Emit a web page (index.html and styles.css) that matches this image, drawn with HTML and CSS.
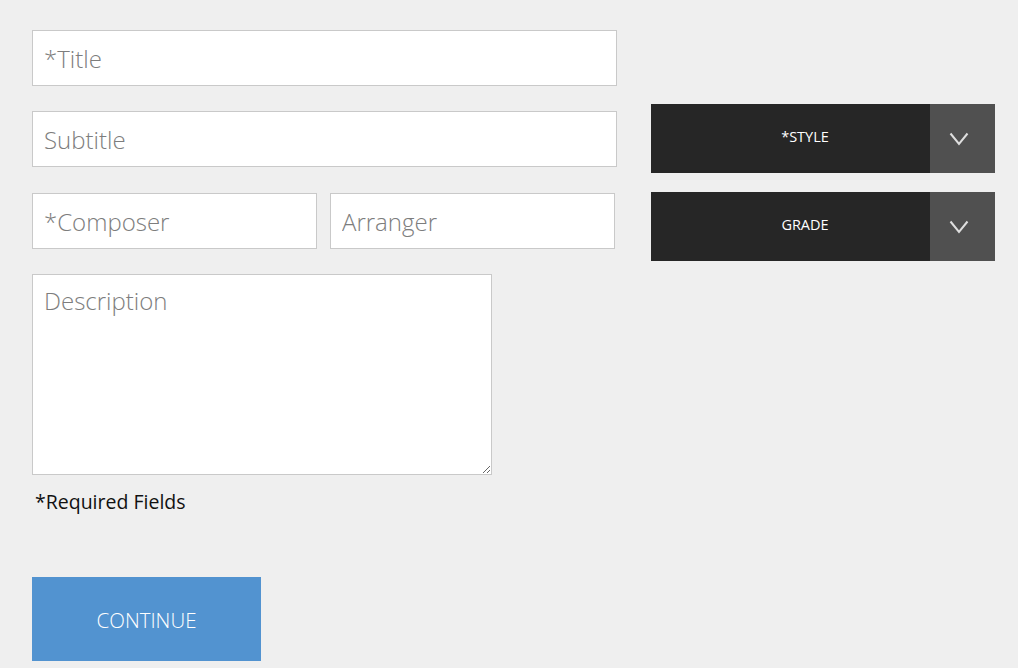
FILE: index.html
```html
<!DOCTYPE html>
<html lang="en">
<head>
<meta charset="utf-8">
<title>Piece details</title>
<link rel="stylesheet" href="styles.css">
</head>
<body>
<div class="page">
  <form class="form-left">
    <input class="field" type="text" placeholder="*Title">
    <input class="field sub" type="text" placeholder="Subtitle">
    <div class="pair">
      <input class="field half" type="text" placeholder="*Composer">
      <input class="field half" type="text" placeholder="Arranger">
    </div>
    <textarea class="field desc" placeholder="Description"></textarea>
    <p class="req">*Required Fields</p>
    <button class="continue" type="button">CONTINUE</button>
  </form>
  <div class="form-right">
    <div class="select">
      <span class="select-label">*STYLE</span>
      <span class="select-arrow"><svg width="20" height="14" viewBox="0 0 20 14"><path d="M1.5 1.5 L10 12 L18.5 1.5" fill="none" stroke="#dedede" stroke-width="2"/></svg></span>
    </div>
    <div class="select">
      <span class="select-label">GRADE</span>
      <span class="select-arrow"><svg width="20" height="14" viewBox="0 0 20 14"><path d="M1.5 1.5 L10 12 L18.5 1.5" fill="none" stroke="#dedede" stroke-width="2"/></svg></span>
    </div>
  </div>
</div>
</body>
</html>
```
FILE: styles.css
```css
html, body {
  margin: 0;
  padding: 0;
  background: #efefef;
  font-family: "Open Sans", "Liberation Sans", sans-serif;
}
.page {
  display: flex;
  gap: 34px;
  padding: 30px 0 0 32px;
}
.form-left {
  width: 585px;
  display: flex;
  flex-direction: column;
  align-items: flex-start;
}
.field {
  box-sizing: border-box;
  width: 585px;
  height: 56px;
  margin: 0 0 25px 0;
  padding: 0 11px;
  border: 1px solid #c9c9c9;
  border-radius: 0;
  background: #fff;
  font-family: "Open Sans", sans-serif;
  font-weight: 300;
  font-size: 24px;
  color: #333;
  outline: none;
}
.field.sub {
  margin-bottom: 26px;
}
.field::placeholder {
  color: #7d7d7d;
}
.pair {
  display: flex;
  gap: 13px;
}
.field.half {
  width: 285px;
}
.field.desc {
  width: 460px;
  height: 201px;
  padding: 12px 11px;
  margin-bottom: 0;
  line-height: 1.2;
  resize: both;
}
.req {
  margin: 14px 0 0 3px;
  font-size: 19.5px;
  line-height: 26px;
  color: #111;
}
.continue {
  margin-top: 62px;
  width: 229px;
  height: 84px;
  border: 0;
  border-radius: 0;
  background: #5293d0;
  color: #fff;
  font-family: "Open Sans", sans-serif;
  font-weight: 300;
  font-size: 20.5px;
  padding: 2px 0 0;
  cursor: pointer;
}
.form-right {
  margin-top: 74px;
  width: 344px;
  display: flex;
  flex-direction: column;
  gap: 19px;
}
.select {
  display: flex;
  height: 69px;
  background: #262626;
}
.select-label {
  flex: 1;
  display: flex;
  align-items: center;
  justify-content: center;
  padding: 0 0 4px 29px;
  color: #fff;
  font-size: 14.5px;
}
.select-arrow {
  width: 65px;
  background: #505050;
  display: flex;
  align-items: center;
  justify-content: center;
}
.select-arrow svg {
  display: block;
  margin: 0 8px 0 0;
}
```
